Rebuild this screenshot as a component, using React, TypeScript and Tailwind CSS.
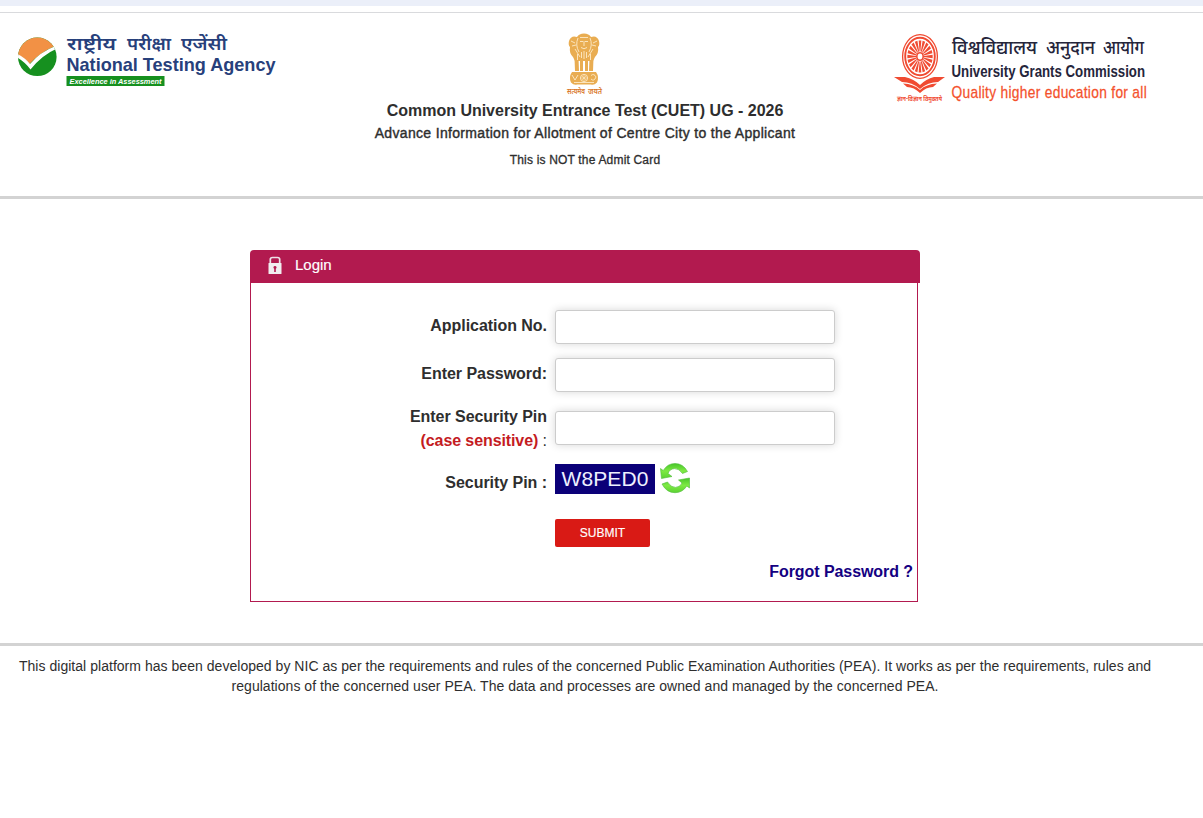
import React from "react";

const sans = "font-['Liberation_Sans',Arial,sans-serif]";
const deva = "'Noto Sans Devanagari','Noto Sans',sans-serif";

type Word = { x: number; w: number; t: string };

function Words({ items, y, size, fill, weight }: { items: Word[]; y: number; size: number; fill: string; weight: number }) {
  return (
    <g fontSize={size} fill={fill} fontWeight={weight} fontFamily={deva}>
      {items.map((i) => (
        <text key={i.t} x={i.x} y={y} textLength={i.w} lengthAdjust="spacingAndGlyphs">{i.t}</text>
      ))}
    </g>
  );
}

function NtaLogo() {
  return (
    <svg width="266" height="60" viewBox="16 32 266 60" className="block overflow-visible">
      <defs>
        <clipPath id="nta"><circle cx="37.300" cy="56.800" r="19.300" /></clipPath>
      </defs>
      <g clipPath="url(#nta)">
        <rect x="16" y="36" width="42" height="42" fill="#16901f" />
        <path d="M16 53.500L20 56Q26 59 29.500 64Q40 52.500 55 46L58 34H16Z" fill="#f29145" />
        <path d="M16 53.300Q25 57.500 30 64Q40 52 55.500 46L57 48.500Q42 55 30.500 69.500Q24 61 16 57Z" fill="#fff" />
      </g>
      <Words y={49.500} size={18} weight={600} fill="#27407b" items={[{ x: 67, w: 49, t: "राष्ट्रीय" }, { x: 127, w: 44, t: "परीक्षा" }, { x: 181, w: 46, t: "एजेंसी" }]} />
      <text x="66.500" y="70.500" textLength="209" lengthAdjust="spacingAndGlyphs" fontSize="18.500" fontWeight="700" fill="#27407b" fontFamily="'Liberation Sans',sans-serif">National Testing Agency</text>
      <rect x="66.500" y="76" width="98" height="10" fill="#16901f" />
      <text x="69.500" y="83.700" textLength="92" lengthAdjust="spacingAndGlyphs" fontSize="7.500" fontWeight="700" fontStyle="italic" fill="#fff" fontFamily="'Liberation Sans',sans-serif">Excellence in Assessment</text>
    </svg>
  );
}

function Emblem() {
  return (
    <svg width="46" height="68" viewBox="562 30 46 68" className="block overflow-visible">
      <g fill="#e9ad52">
        <path d="M577 37Q579 33.500 584 33.500Q589 33.500 591 37Q597 35 599 41Q600 45 598 47Q599 53 595 57L593 61H575L573 57Q569 53 570 47Q568 45 569 41Q571 35 577 37Z" />
        <path d="M574.500 58H578.500L579 71H575ZM580 60H583V71H580ZM585 60H588V71H585ZM589.500 58H593.500L593 71H589Z" />
        <path d="M572 72H596Q599.500 77 597 82.500Q594 85.500 591 84.500H577Q574 85.500 571 82.500Q568.500 77 572 72Z" />
      </g>
      <g fill="none" stroke="#fff3d8" strokeWidth="0.800">
        <path d="M580 37.500H588M580 41.500H583M585 41.500H588M584 41V46M581 47.500Q584 50 587 47.500M578 38Q575 45 579 52M590 38Q593 45 589 52M571 41L575 43M597 41L593 43M572 46L576 45M596 46L592 45M575 49L580 57M593 49L588 57M584 51V59M581.500 52V58M586.500 52V58M577.500 54V60M590.500 54V60M572 75L575 80L578 75M591 75.500Q594 73 596 77Q594 82 591 79M574 82.500H594" />
        <circle cx="584" cy="78" r="3.600" />
        <path d="M581 78H587M584 75V81M582 76L586 80M586 76L582 80" strokeWidth="0.500" />
      </g>
      <Words y={93.500} size={7.500} weight={600} fill="#d9772b" items={[{ x: 567, w: 18, t: "सत्यमेव" }, { x: 588, w: 14, t: "जयते" }]} />
    </svg>
  );
}

const rays = Array.from({ length: 20 }, (_, i) => i * 18);

function UgcLogo() {
  return (
    <svg width="266" height="76" viewBox="890 30 266 76" className="block overflow-visible">
      <g stroke="#f04b32" fill="none">
        <ellipse cx="920" cy="56.500" rx="17.400" ry="21.800" strokeWidth="1.300" />
        <ellipse cx="920" cy="56.500" rx="14.800" ry="18.700" strokeWidth="1.900" />
        <g transform="translate(920 56.500) scale(0.790 1)" fill="#f04b32" stroke="none">
          {rays.map((a) => (
            <path key={a} d="M-0.500 -5L-1.700 -16H1.700L0.500 -5Z" transform={`rotate(${a})`} />
          ))}
        </g>
        <ellipse cx="920" cy="56.500" rx="3.200" ry="3.800" strokeWidth="1.600" />
      </g>
      <g fill="#f04b32">
        <path d="M894 77H905Q914 79 920 85Q926 79 934 77H945L938 82Q928 82 920 89Q912 82 902 82Z" />
        <path d="M903 83.500Q914 84 920 90Q926 84 937 83.500L933 87Q926 87 920 93Q914 87 907 87Z" />
      </g>
      <text x="897" y="101" textLength="45" lengthAdjust="spacingAndGlyphs" fontSize="7" fontWeight="700" fill="#f04b32" fontFamily={deva}>ज्ञान-विज्ञान विमुक्तये</text>
      <Words y={54} size={19} weight={500} fill="#25253b" items={[{ x: 952, w: 85, t: "विश्वविद्यालय" }, { x: 1046, w: 49, t: "अनुदान" }, { x: 1103, w: 41, t: "आयोग" }]} />
      <text x="951.500" y="77" textLength="193.500" lengthAdjust="spacingAndGlyphs" fontSize="16.500" fontWeight="700" fill="#25253b" fontFamily="'Liberation Sans',sans-serif">University Grants Commission</text>
      <g transform="translate(951.500 97.500) scale(0.860 1)">
        <text x="0" y="0" textLength="227" fontSize="16" stroke="#f4512c" strokeWidth="0.250" fill="#f4512c" fontFamily="'Liberation Sans',sans-serif">Quality higher education for all</text>
      </g>
    </svg>
  );
}

function LockIcon() {
  return (
    <svg width="14" height="18" viewBox="0 0 14 18" className="block">
      <path d="M2.300 8V3.500Q2.300 1.500 4.500 1.500H9.500Q11.700 1.500 11.700 3.500V8" fill="none" stroke="#eee0e7" strokeWidth="1.700" />
      <rect x="0.500" y="7" width="13" height="11" rx="0.500" fill="#f1edf0" />
      <path d="M7 10a1.500 1.500 0 0 1 .8 2.800V16H6.200V12.800A1.500 1.500 0 0 1 7 10Z" fill="#b21a4f" />
    </svg>
  );
}

function RefreshIcon() {
  return (
    <svg width="32" height="32" viewBox="0 0 32 32" className="block">
      <defs>
        <linearGradient id="rg" x1="0" y1="0" x2="0" y2="1">
          <stop offset="0" stopColor="#46c52a" />
          <stop offset="0.500" stopColor="#7eea43" />
          <stop offset="1" stopColor="#5bd233" />
        </linearGradient>
      </defs>
      <g fill="url(#rg)" stroke="#4dbb38" strokeWidth="0.600">
        <path d="M1.500 6.500L4.200 8.500Q8.500 1.500 16 1.500Q24 1.500 28.500 9.500L23.500 11.500Q20 6.500 15.500 6.600Q10.500 7 9 11.500L13 14.500L2.500 16.500Z" />
        <path d="M30.500 26L27.800 24Q23.500 30.700 16 30.700Q7.500 30.700 3 22L8.500 20Q12 25.600 16.500 25.400Q21.500 25 23 21L19.500 18L30.500 16Z" />
      </g>
    </svg>
  );
}

const label = "w-[296px] shrink-0 text-right text-base font-bold leading-6 tracking-[-0.040px] whitespace-nowrap";
const input = "h-[34px] w-[280px] rounded-[3px] border border-[#ccc] bg-white px-3 text-sm shadow-[0_0_8px_rgba(0,0,0,0.16)] outline-none";

export default function App() {
  return (
    <div className={`h-[818px] overflow-hidden bg-white text-[#2e2e2e] ${sans}`}>
      <div className="h-1.5 bg-[#ebeff9]" />
      <div className="h-[7px] border-b border-[#d9dadd]" />
      <header className="flex h-[186px] items-start justify-between border-b-[3px] border-[#d3d3d3]">
        <div className="w-[374px] pl-4 pt-[19px]"><NtaLogo /></div>
        <div className="flex w-[422px] flex-col items-center pt-[17px]">
          <Emblem />
          <h1 className="mt-px whitespace-nowrap text-base font-bold leading-6 tracking-[-0.010px]">Common University Entrance Test (CUET) UG - 2026</h1>
          <h2 className="-mt-px whitespace-nowrap text-sm leading-[22px] tracking-[0.330px] [-webkit-text-stroke:0.4px_#2e2e2e]">Advance Information for Allotment of Centre City to the Applicant</h2>
          <p className="mt-[7px] whitespace-nowrap text-xs leading-[18px] tracking-[0.180px] [-webkit-text-stroke:0.3px_#2e2e2e]">This is NOT the Admit Card</p>
        </div>
        <div className="w-[407px] pl-[94px] pt-[17px]"><UgcLogo /></div>
      </header>

      <main className="h-[447px] border-b-[3px] border-[#d3d3d3] pl-[250px] pt-[51px]">
        <div className="flex h-[33px] w-[670px] items-start rounded-t-[4px] bg-[#b21a4f] pl-[18px] pt-[6px] text-white">
          <LockIcon />
          <span className="ml-[13px] -mt-px text-[15px] leading-5 [-webkit-text-stroke:0.150px_#fff]">Login</span>
        </div>
        <form className="h-[319px] w-[668px] border border-t-0 border-[#b21a4f] pt-[27px]" onSubmit={(e) => e.preventDefault()}>
          <div className="flex h-12 items-start gap-2">
            <label className={`${label} pt-1`}>Application No.</label>
            <input aria-label="Application number" className={input} />
          </div>
          <div className="flex h-[46px] items-start gap-2">
            <label className={`${label} pt-1`}>Enter Password:</label>
            <input aria-label="Password" type="password" className={input} />
          </div>
          <div className="flex h-[60px] items-start gap-2">
            <label className={`${label} pt-px`}>
              Enter Security Pin<br />
              <span className="tracking-[-0.100px] text-[#c41c1f]">(case sensitive)</span><span className="font-normal"> :</span>
            </label>
            <div className="pt-[7px]"><input aria-label="Security pin" className={input} /></div>
          </div>
          <div className="flex h-[55px] items-start">
            <span className={`${label} pt-[7px]`}>Security Pin :</span>
            <div className="ml-2 flex h-[30px] w-[100px] items-center justify-center bg-[#0b0078] pb-px text-[21px] tracking-[0.100px] text-[#eef0ff]">W8PED0</div>
            <div className="-mt-[2px] ml-[4px]"><RefreshIcon /></div>
          </div>
          <button className="ml-[304px] block h-7 w-[95px] rounded-[2px] bg-[#d91a15] text-xs text-white [-webkit-text-stroke:0.150px_#fff]">SUBMIT</button>
          <div className="mt-[13px] pr-[4px] text-right text-base font-bold leading-6 tracking-[-0.070px] text-[#140082]">Forgot Password ?</div>
        </form>
      </main>

      <footer className="w-[1170px] pt-[10px] text-center text-sm leading-5">
        <p className="whitespace-nowrap tracking-[0.034px]">This digital platform has been developed by NIC as per the requirements and rules of the concerned Public Examination Authorities (PEA). It works as per the requirements, rules and</p>
        <p className="whitespace-nowrap tracking-[0.034px]">regulations of the concerned user PEA. The data and processes are owned and managed by the concerned PEA.</p>
      </footer>
    </div>
  );
}
